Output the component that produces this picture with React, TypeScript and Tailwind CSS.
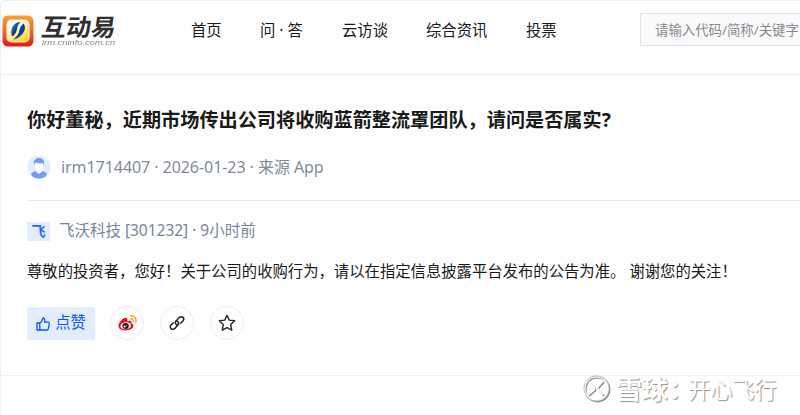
import React from "react";

const sans = "font-['Noto_Sans','Noto_Sans_CJK_SC',sans-serif]";
const cjk = "font-['Noto_Sans_CJK_SC',sans-serif]";

function Logo() {
  return (
    <div className="flex h-[34px] items-center">
      <svg width="32" height="32" viewBox="0 0 32 32" className="mt-px ml-px shrink-0">
        <defs>
          <linearGradient id="frame" x1="0" y1="0" x2="0" y2="1">
            <stop offset="0" stopColor="#f9a03a" />
            <stop offset="0.5" stopColor="#f0682a" />
            <stop offset="1" stopColor="#e5160f" />
          </linearGradient>
          <linearGradient id="panel" x1="0" y1="0" x2="0.6" y2="1">
            <stop offset="0.3" stopColor="#fffdf2" />
            <stop offset="1" stopColor="#ffd530" />
          </linearGradient>
          <linearGradient id="wing" x1="0" y1="0" x2="1" y2="1">
            <stop offset="0" stopColor="#45b3e8" />
            <stop offset="0.5" stopColor="#0a3c90" />
            <stop offset="1" stopColor="#0b63b8" />
          </linearGradient>
        </defs>
        <rect x="0.5" y="0.5" width="31" height="31" rx="5.5" fill="url(#frame)" />
        <rect x="5" y="5" width="22" height="22" rx="4.5" fill="url(#panel)" stroke="#fff3dc" strokeWidth="1.2" />
        <path d="M18.500 7 C12 7.500 8.500 12 9.500 19.500 L10.500 21.500 C13 19 14.500 17.500 15 14 C15.300 11 16.500 9 18.500 7Z" fill="url(#wing)" />
        <path d="M21.500 8.500 C24.500 12 22.500 17.500 19 20.500 C16.500 23 14 24 11.500 24.500 C15.500 21 17 18.500 17.500 15 C18 12 19.500 10 21.500 8.500Z" fill="url(#wing)" />
      </svg>
      <div className="ml-[8px] w-[76px]">
        <div className={`${cjk} w-[72px] origin-left -skew-x-8 scale-x-[1.03] whitespace-nowrap text-[24px] leading-[24px] font-bold text-[#303030]`}>
          互动易
        </div>
        <div className="mt-px w-[46px] origin-left scale-x-[1.23] whitespace-nowrap font-['Liberation_Sans',sans-serif] text-[7.6px] leading-[8px] italic text-[#888]">
          irm.cninfo.com.cn
        </div>
      </div>
    </div>
  );
}

function Round({ children }: { children: React.ReactNode }) {
  return (
    <button className="flex size-[34px] items-center justify-center rounded-full border border-[#eaeff9] bg-white">
      {children}
    </button>
  );
}

export default function App() {
  return (
    <div className={`${sans} relative h-[415px] w-[800px] overflow-hidden rounded-tl-[5px] border-t border-l border-[#efefef] bg-white text-[15.35px] text-[#1a1a1a]`}>
      <header className="flex h-[74px] border-b border-[#efefef]">
        <div className="w-[190px] shrink-0 pt-[12px]">
          <Logo />
        </div>
        <nav className="flex w-[449px] shrink-0 gap-[38px] pt-[17px] leading-[24px] whitespace-nowrap">
          <a className="w-[31px]">首页</a>
          <a className="w-[44px]">问 · 答</a>
          <a className="w-[46px]">云访谈</a>
          <a className="w-[62px]">综合资讯</a>
          <a>投票</a>
        </nav>
        <div className="mt-[12px] flex h-[33px] flex-1 items-center overflow-hidden rounded-l-[2px] border border-r-0 border-[#dfe2e6] bg-[#fafafa] pl-[14px] text-[13.4px] whitespace-nowrap text-[#858b93]">
          <span className="mt-px">请输入代码/简称/关键字</span>
        </div>
      </header>

      <main className="h-[301px] border-b border-[#efefef] pl-[26px]">
        <h1 className="pt-[31px] text-[19.17px] leading-[28px] font-bold whitespace-nowrap">
          你好董秘，近期市场传出公司将收购蓝箭整流罩团队，请问是否属实?
        </h1>
        <div className="mt-[20px] flex h-[26px] items-center text-[#828b98]">
          <svg width="24" height="24" viewBox="0 0 24 24" className="-mt-px shrink-0">
            <circle cx="12" cy="12" r="11.500" fill="#e2edff" />
            <path d="M4 19.500 C5 17 7 16.500 9 16.500 H15 C17 16.500 19 17 20 19.500 C18 22.500 15.500 23.500 12 23.500 S6 22.500 4 19.500Z" fill="#719bff" />
            <path d="M9.500 14 H14.500 V17 L12 19 L9.500 17Z" fill="#fff" />
            <path d="M7.500 8 H16.500 V11 C16.500 14 14.500 16 12 16 S7.500 14 7.500 11Z" fill="#fafcff" />
            <path d="M7 10 C6 5 9 3 12 3 C16 3 18 6 16.700 10 L15.500 8 C12 8.500 10 8 8.500 7.500Z" fill="#719bef" />
          </svg>
          <span className="ml-[10px] text-[16px] tracking-[-0.06px] whitespace-pre">irm1714407 · 2026-01-23 · 来源 App</span>
        </div>
        <div className="mt-[20px] border-t border-[#e9e9e9]" />
        <div className="mt-[17px] flex h-[26px] items-center text-[#78859b]">
          <span className="flex h-[19px] w-[23px] items-center justify-center bg-[#e4edfd] text-[14px] leading-none font-bold text-[#2766f5]">飞</span>
          <span className="ml-[9px] text-[15.5px] tracking-[-0.02px] whitespace-pre">飞沃科技 [301232] · 9小时前</span>
        </div>
        <p className="mt-[14px] leading-[26px] whitespace-nowrap">
          尊敬的投资者，您好！关于公司的收购行为，请以在指定信息披露平台发布的公告为准。 谢谢您的关注！
        </p>
        <div className="mt-[22px] flex items-center">
          <button className="flex h-[33px] w-[68px] items-center justify-center gap-[5px] rounded-[2px] bg-[#e4edfd] text-[#0755f5]">
            <svg width="14" height="14" viewBox="0 0 14 14" fill="none" stroke="currentColor" strokeWidth="1.300" strokeLinejoin="round" className="mt-px">
              <path d="M3.800 6 H1 V13 H3.800 M3.800 6 V13 H10.800 Q11.900 13 12.200 12 L13.300 7.200 Q13.500 5.200 11.800 5.200 H8.700 V2.500 Q8.500 1 7 1 C6.400 3.500 5.500 5 3.800 6Z" />
            </svg>
            <span>点赞</span>
          </button>
          <div className="ml-[15px] flex gap-[16px]">
            <Round>
              <svg width="19" height="17" viewBox="0 0 19 17" fill="none">
                <path d="M8 3 C6 2 0.500 7 0.500 11 C0.500 17.500 15.500 16.500 15.500 10.800 C15.500 9.500 14.500 8.700 13.200 8.300 C14 6 12.500 5 9.200 6.300 C9.700 4.600 9.500 3.300 8 3Z" fill="#f01020" />
                <ellipse cx="7.700" cy="10.800" rx="5.300" ry="3.500" transform="rotate(-8 7.700 10.800)" fill="#fff" />
                <ellipse cx="7.600" cy="11" rx="3.200" ry="2.900" fill="#171717" />
                <circle cx="6.600" cy="11.600" r="1.150" fill="#fff" />
                <circle cx="8.500" cy="10.300" r="0.500" fill="#fff" />
                <path d="M12.500 1.200 C16.500 0.300 19 4 17.600 7.300 M12.700 3.900 C14.700 3.300 15.800 5 15.100 6.700" stroke="#f6a020" strokeWidth="1.400" strokeLinecap="round" />
              </svg>
            </Round>
            <Round>
              <svg width="16" height="16" viewBox="0 0 16 16" fill="none" stroke="#202020" strokeWidth="1.500" strokeLinecap="round">
                <path d="M8 10 C6.200 9.200 5.800 7.200 7.100 5.900 L10.200 2.600 C11.400 1.400 13 1.400 14 2.400 C15 3.400 14.900 5 13.700 6.200 L11.600 8.300" />
                <path d="M8 6 C9.800 6.800 10.200 8.800 8.900 10.100 L5.800 13.400 C4.600 14.600 3 14.600 2 13.600 C1 12.600 1.100 11 2.300 9.800 L4.400 7.700" />
              </svg>
            </Round>
            <Round>
              <svg width="18" height="18" viewBox="0 0 18 18" fill="none" stroke="#292929" strokeWidth="1.400" strokeLinejoin="round">
                <path d="M9 1.300 L11.200 6.100 L16.700 6.800 L12.700 10.600 L13.800 16.200 L9 13.600 L4.200 16.200 L5.300 10.600 L1.300 6.800 L6.800 6.100Z" />
              </svg>
            </Round>
          </div>
        </div>
      </main>

      <div className={`${cjk} absolute top-[373px] left-[582px] flex h-[30px] items-center whitespace-nowrap text-white [text-shadow:1px_1px_1px_#909090]`}>
        <svg width="28" height="28" viewBox="0 0 28 28" fill="none" className="shrink-0 drop-shadow-[1px_1px_0.5px_#858585]">
          <circle cx="13.500" cy="13.500" r="12.300" stroke="#bdbdbd" strokeWidth="1.200" />
          <circle cx="13.500" cy="13.500" r="11.500" stroke="#fff" strokeWidth="1.200" />
          <path d="M6 7 L11 12.500 Q12 13.700 11 14.800 L5 20 M20 6 L14.800 11.500 Q13.500 13 14.800 14.500 L20 20" stroke="#fff" strokeWidth="2" />
        </svg>
        <span className="-mt-[3px] ml-[5px] w-[72px] text-[26px] leading-[30px] font-bold">雪球：</span>
        <span className="-mt-[3px] text-[22.2px] leading-[30px]">开心飞行</span>
      </div>
    </div>
  );
}
